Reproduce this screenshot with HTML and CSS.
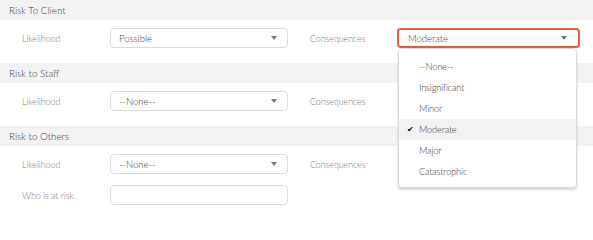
FILE: index.html
```html
<!DOCTYPE html>
<html>
<head>
<meta charset="utf-8">
<link rel="stylesheet" href="styles.css">
</head>
<body>
<section class="sec">
  <div class="sec-head">Risk To Client</div>
  <div class="sec-body">
    <div class="row">
      <span class="lbl">Likelihood</span>
      <div class="select"><span>Possible</span><i class="caret"></i></div>
      <span class="spacer"></span>
      <span class="lbl">Consequences</span>
      <div class="select-wrap">
        <div class="select focus"><span>Moderate</span><i class="caret"></i></div>
        <ul class="menu">
          <li>--None--</li>
          <li>Insignificant</li>
          <li>Minor</li>
          <li class="active"><span class="check">✔</span>Moderate</li>
          <li>Major</li>
          <li>Catastrophic</li>
        </ul>
      </div>
    </div>
  </div>
</section>
<section class="sec">
  <div class="sec-head">Risk to Staff</div>
  <div class="sec-body">
    <div class="row">
      <span class="lbl">Likelihood</span>
      <div class="select"><span>--None--</span><i class="caret"></i></div>
      <span class="spacer"></span>
      <span class="lbl">Consequences</span>
    </div>
  </div>
</section>
<section class="sec">
  <div class="sec-head">Risk to Others</div>
  <div class="sec-body">
    <div class="row">
      <span class="lbl">Likelihood</span>
      <div class="select"><span>--None--</span><i class="caret"></i></div>
      <span class="spacer"></span>
      <span class="lbl">Consequences</span>
    </div>
    <div class="row">
      <span class="lbl">Who is at risk</span>
      <div class="input"></div>
    </div>
  </div>
</section>
</body>
</html>
```

FILE: styles.css
```css
html, body {
  margin: 0;
  padding: 0;
  background: #ffffff;
}
body {
  font-family: Lato, "Open Sans", sans-serif;
  font-weight: 300;
  color: #3e3e3c;
  width: 593px;
  height: 216px;
  overflow: hidden;
}
.sec-head {
  height: 20px;
  line-height: 20px;
  background: #f3f2f2;
  padding-left: 9px;
  font-size: 9.8px;
  color: #3e3e3c;
}
.sec-body {
  padding: 8px 0 15px 22px;
  display: flex;
  flex-direction: column;
  gap: 11px;
}
.row {
  display: grid;
  grid-template-columns: 88px 178px 22px 87px 183px;
  align-items: center;
  height: 20px;
}
.lbl {
  font-size: 8.8px;
  color: #7a7876;
}
.select, .input {
  box-sizing: border-box;
  height: 20px;
  border: 1px solid #dddbda;
  border-radius: 4px;
  background: #fff;
  display: flex;
  align-items: center;
  padding: 0 8px;
  font-size: 9.5px;
  color: #3e3e3c;
  position: relative;
}
.select span { flex: 1; }
.caret {
  width: 0;
  height: 0;
  margin-right: 2px;
  border-left: 3px solid transparent;
  border-right: 3px solid transparent;
  border-top: 4px solid #6a7a96;
}
.select-wrap {
  position: relative;
  height: 20px;
}
.select.focus {
  border: 2px solid #e0603a;
  padding: 0 9px 0 9px;
}
.select-wrap .select { width: 183px; }
.menu {
  position: absolute;
  left: 1px;
  top: 20px;
  width: 179px;
  box-sizing: border-box;
  margin: 0;
  padding: 7px 0 5px 0;
  list-style: none;
  background: #fff;
  border: 1px solid #dddbda;
  border-radius: 4px;
  box-shadow: 0 2px 3px rgba(0,0,0,0.16);
  z-index: 5;
}
.menu li {
  height: 21px;
  line-height: 21px;
  padding-left: 20px;
  font-size: 9.3px;
  letter-spacing: -0.2px;
  color: #3e3e3c;
  position: relative;
}
.menu li.active { background: #f3f2f2; }
.check {
  position: absolute;
  left: 8px;
  top: 0;
  font-size: 8px;
  font-weight: 400;
  color: #080707;
}
```
